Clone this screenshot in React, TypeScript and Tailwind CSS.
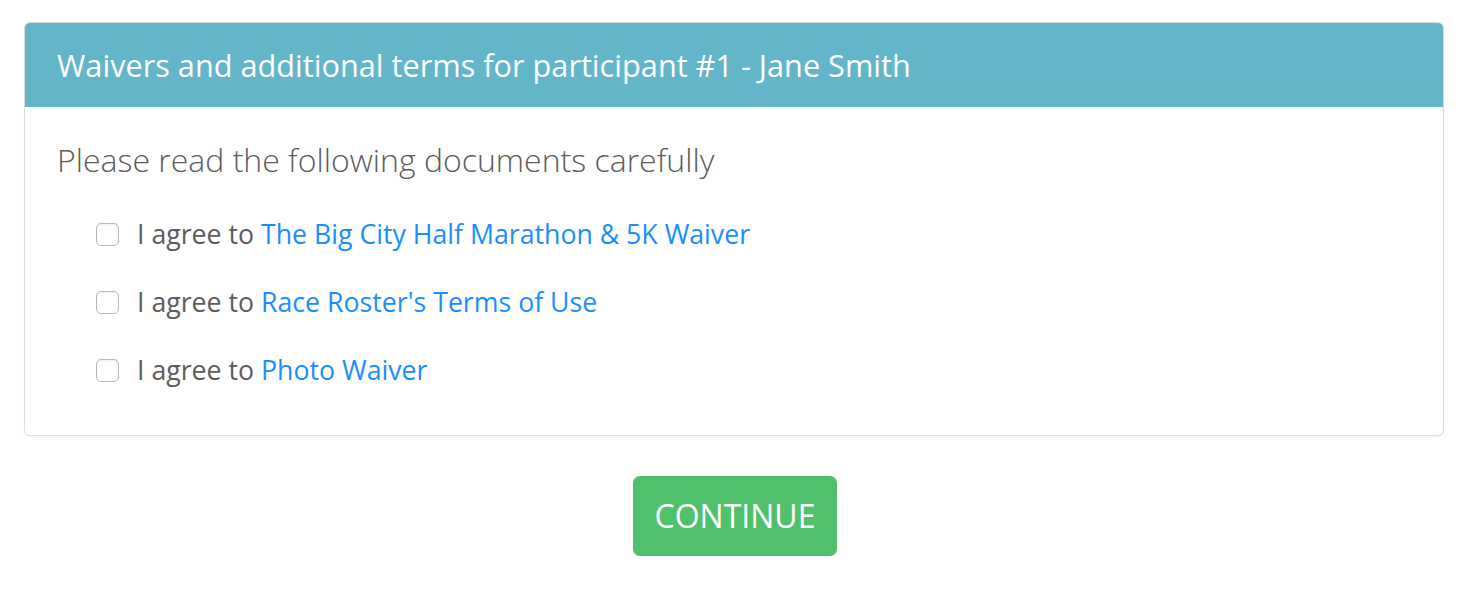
const documents = [
  "The Big City Half Marathon & 5K Waiver",
  "Race Roster's Terms of Use",
  "Photo Waiver",
];

export default function App() {
  return (
    <div className="min-h-[590px] bg-white pt-[22px] font-['Open_Sans',sans-serif]">
      <section className="ml-[24px] w-[1420px] overflow-hidden rounded-[6px] border border-[#dcdcdc] shadow-[0_1px_2px_rgba(0,0,0,0.06)]">
        <header className="flex h-[84px] items-center bg-[#63b6ca] px-[32px]">
          <h1 className="text-[30.7px] font-normal text-white">
            Waivers and additional terms for participant #1 - Jane Smith
          </h1>
        </header>
        <div className="px-[32px] pb-[48px] pt-[32px]">
          <p className="text-[32px] font-light leading-[42px] text-[#5c5c5c]">
            Please read the following documents carefully
          </p>
          <ul className="mt-[36px] flex flex-col gap-[34px] pl-[39px]">
            {documents.map((doc) => (
              <li key={doc} className="flex items-center gap-[18px]">
                <span className="size-[23px] shrink-0 rounded-[5px] border border-[#b8b8b8] bg-white shadow-[inset_0_1px_2px_rgba(0,0,0,0.08)]" />
                <span className="text-[26.7px] leading-[34px] text-[#5c5c5c]">
                  I agree to <a className="text-[#1b8eff]">{doc}</a>
                </span>
              </li>
            ))}
          </ul>
        </div>
      </section>
      <div className="mt-[40px] flex justify-center">
        <button className="h-[80px] w-[204px] rounded-[7px] bg-[#50c16a] text-[32px] text-white">
          CONTINUE
        </button>
      </div>
    </div>
  );
}
